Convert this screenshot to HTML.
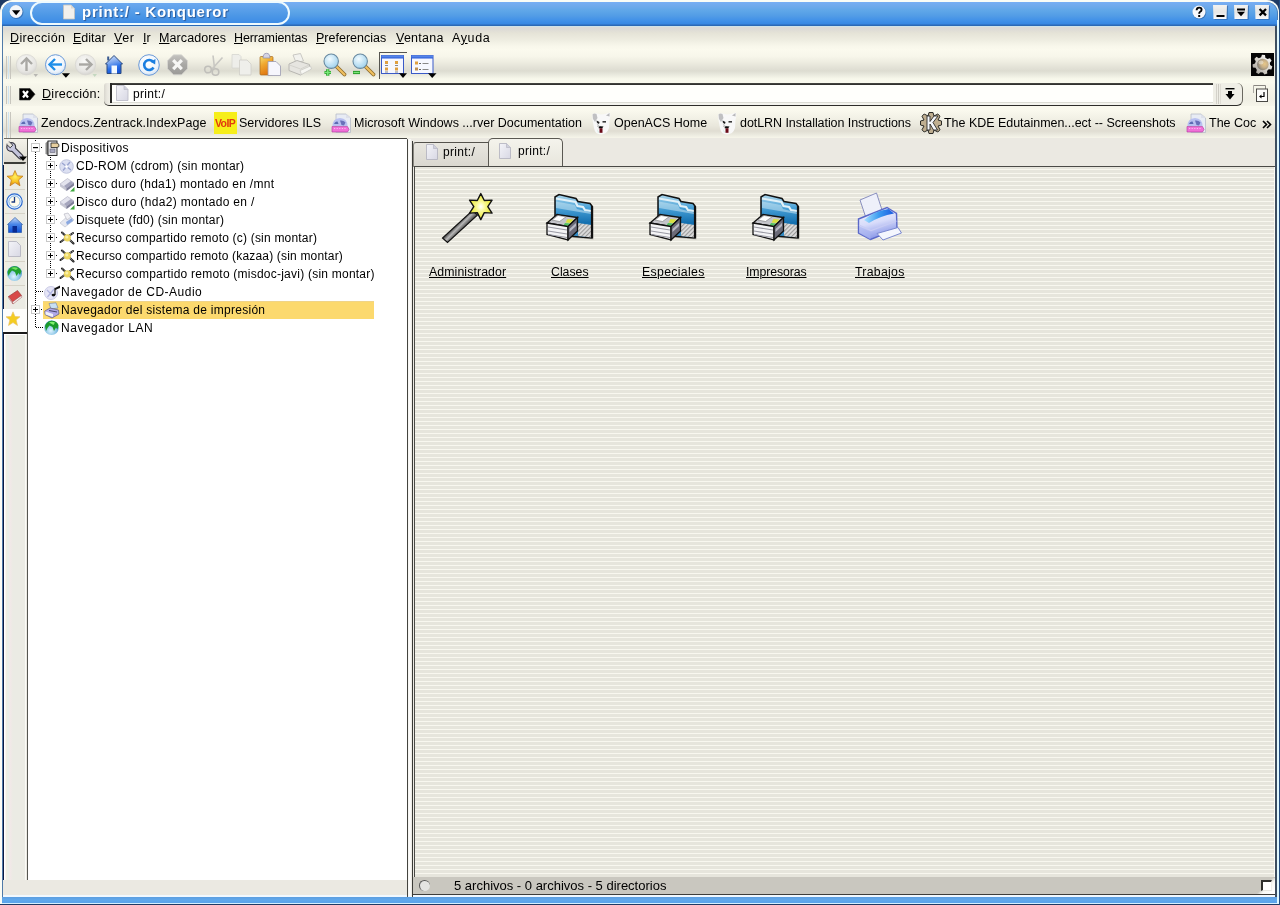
<!DOCTYPE html>
<html><head><meta charset="utf-8">
<style>
html,body{margin:0;padding:0}
body{width:1280px;height:905px;position:relative;overflow:hidden;background:#f6f8fa;font-family:"Liberation Sans",sans-serif;color:#000}
.a{position:absolute}
.t{will-change:transform;position:absolute;white-space:nowrap;line-height:14px;font-size:12.5px;height:14px}
.ul{text-decoration:underline;text-underline-offset:0.5px;text-decoration-thickness:1px}
svg{position:absolute;overflow:visible}
</style></head><body>
<!-- navy desktop corners -->
<div class="a" style="left:0;top:0;width:14px;height:14px;background:#1f3a64"></div>
<div class="a" style="left:1266px;top:0;width:14px;height:14px;background:#1f3a64"></div>
<div class="a" style="left:0;top:904px;width:1280px;height:1px;background:#1f3a64"></div>
<div class="a" style="left:1279px;top:0;width:1px;height:905px;background:#234c80"></div>
<!-- window light outline -->
<div class="a" style="left:0;top:0;width:1279px;height:904px;background:#fbfcf6;border-radius:12px 12px 0 0"></div>
<!-- frame blue -->
<div class="a" style="left:2px;top:2px;width:1276px;height:901px;background:#4a7fb8;border-radius:11px 11px 0 0"></div>
<!-- title bar -->
<div class="a" style="left:2px;top:2px;width:1275px;height:24px;border-radius:11px 11px 0 0;background:linear-gradient(#78aef4 0px,#70aaec 4px,#5ea6e8 9px,#529ce6 14px,#3f8fe8 19px,#3787e2 22px,#2b68b6 23px,#2b68b6 24px)"></div>
<!-- title capsule -->
<div class="a" style="left:30px;top:1px;width:256px;height:20px;border:2px solid #eefaff;border-radius:12px;background:linear-gradient(#6aa8ee,#4d98e6 60%,#3d8ce6)"></div>
<!-- bottom blue bar -->
<div class="a" style="left:2px;top:895px;width:1275px;height:2px;background:#f0f8ff"></div>
<div class="a" style="left:2px;top:897px;width:1275px;height:6px;background:linear-gradient(#5d9ee0,#5fa8ec 3px,#5aa2ea)"></div>
<div class="a" style="left:2px;top:903px;width:1277px;height:1px;background:#d6f0ff"></div>
<!-- right border -->
<div class="a" style="left:1275px;top:26px;width:2px;height:871px;background:#3e4e60"></div>
<div class="a" style="left:1277px;top:20px;width:2px;height:884px;background:#e0f8ff"></div>
<!-- left border -->
<div class="a" style="left:2px;top:26px;width:1px;height:871px;background:#4f7aa8"></div>

<!-- main window body -->
<div class="a" id="body" style="left:3px;top:26px;width:1272px;height:869px;background:#ebe9e2"></div>
<!-- menubar + toolbar gradient -->
<div class="a" style="left:3px;top:26px;width:1272px;height:57px;background:linear-gradient(#cfe2e8 0px,#cfe2e8 1px,#dddad8 1px,#dcdad6 3px,#e5e3d7 7px,#eeede1 14px,#f8f7eb 20px,#fbfaee 24px,#f8f7eb 30px,#eeede1 36px,#e2e1d6 42px,#dddcd1 45px,#eaeadf 49px,#f8f8ec 53px,#fafaee 57px)"></div>
<!-- address bar bg -->
<div class="a" style="left:3px;top:83px;width:1272px;height:23px;background:linear-gradient(#f8f8ec 0px,#f2f1e6 10px,#efeee3 16px,#f6f5ea 23px)"></div>
<!-- bookmark bar -->
<div class="a" style="left:3px;top:106px;width:1272px;height:32px;background:linear-gradient(#faf9ee 0px,#faf9ee 4px,#f2f1e6 12px,#e9e7dc 20px,#e0ddd2 25px,#ecebe0 29px,#f7f6ea 32px)"></div>


<!-- ============ MAIN AREA ============ -->
<!-- sidebar buttons column -->
<div class="a" style="left:3px;top:165px;width:1px;height:144px;background:#0a1a40"></div><div class="a" style="left:3px;top:334px;width:1px;height:546px;background:#0a1a40"></div>
<div class="a" style="left:4px;top:139px;width:23px;height:24px;background:linear-gradient(#f4f2ea,#dddbd2)"></div>
<div class="a" style="left:4px;top:162px;width:22px;height:2px;background:#3c3c38;border-radius:0 0 2px 0"></div><div class="a" style="left:4px;top:138px;width:23px;height:1px;background:#6e6c64"></div>
<div class="a" style="left:4px;top:165px;width:23px;height:144px;background:linear-gradient(90deg,#f6f0e4 0px,#f2ecdc 2px,#e6f0e6 4px,#f2e8e6 6px,#ebebe4 9px,#ebebe4 21px,#f6f6f0 22px,#f6f6f0 23px)"></div>
<div class="a" style="left:5px;top:189px;width:20px;height:1px;background:#d6d3c8"></div>
<div class="a" style="left:5px;top:213px;width:20px;height:1px;background:#d6d3c8"></div>
<div class="a" style="left:5px;top:237px;width:20px;height:1px;background:#d6d3c8"></div>
<div class="a" style="left:5px;top:261px;width:20px;height:1px;background:#d6d3c8"></div>
<div class="a" style="left:5px;top:285px;width:20px;height:1px;background:#d6d3c8"></div>
<div class="a" style="left:3px;top:309px;width:24px;height:23px;background:#fdfdfb"></div>
<div class="a" style="left:3px;top:332px;width:24px;height:2px;background:#1a1a1a"></div>
<div class="a" style="left:4px;top:334px;width:22px;height:546px;border-left:1px solid #ffffff;border-top:1px solid #ffffff;border-right:1px solid #fafaf6;box-sizing:border-box;background:linear-gradient(90deg,#ffffff 0px,#f4ede0 1px,#e6f0e8 3px,#f2e8e8 5px,#ebebe4 8px,#ebebe4 100%)"></div>
<!-- tree panel -->
<div class="a" style="left:27px;top:138px;width:380px;height:742px;background:#ffffff"></div>
<div class="a" style="left:27px;top:138px;width:1px;height:742px;background:#555550"></div>
<div class="a" style="left:27px;top:138px;width:380px;height:1px;background:#444440"></div>
<!-- splitter -->
<div class="a" style="left:407px;top:139px;width:1px;height:758px;background:#44443f;border-radius:1px"></div>
<div class="a" style="left:408px;top:139px;width:4px;height:757px;background:linear-gradient(90deg,#f4f3ee,#ffffff,#e6e4dc)"></div>
<div class="a" style="left:412px;top:141px;width:1px;height:756px;background:#3a3a36"></div>
<!-- tabs -->
<div class="a" style="left:413px;top:142px;width:75px;height:24px;border-top:1px solid #54524c;border-left:1px solid #8a8880;border-radius:3px 0 0 0;background:linear-gradient(#e8e6df,#d9d7cf)"></div>
<div class="a" style="left:488px;top:138px;width:73px;height:28px;border:1px solid #5a5852;border-bottom:none;border-radius:5px 5px 0 0;background:linear-gradient(#f4f3ec,#e7e5dc)"></div>
<!-- content area -->
<div class="a" style="left:414px;top:166px;width:861px;height:711px;background:repeating-linear-gradient(#f8f7ef 0px,#f8f7ef 1px,#e6e5dc 1px,#e6e5dc 4px);background-position:0 3px"></div>
<div class="a" style="left:414px;top:166px;width:861px;height:1px;background:#4a4a46"></div>
<div class="a" style="left:414px;top:166px;width:1px;height:711px;background:#4a4a46"></div>
<div class="a" style="left:1274px;top:167px;width:1px;height:710px;background:#fbfbf6"></div>
<!-- status bar -->
<div class="a" style="left:413px;top:877px;width:862px;height:17px;background:#c9c7bf"></div>
<div class="a" style="left:413px;top:894px;width:862px;height:1px;background:#3e3d3a"></div>
<div class="a" style="left:419px;top:880px;width:11px;height:11px;border-radius:50%;background:#e4e4e2;border-left:1px solid #555;border-top:1px solid #555;box-sizing:border-box"></div>
<div class="t" style="left:454px;top:879px;font-size:13px;">5 archivos - 0 archivos - 5 directorios</div>
<div class="a" style="left:1257px;top:878px;width:18px;height:16px;background:linear-gradient(135deg,#c9c7bf 0%,#c9c7bf 45%,#f8f8f4 60%,#ffffff 100%)"></div><div class="a" style="left:1261px;top:880px;width:11px;height:11px;background:#fff;border-top:2px solid #2e2e2c;border-left:2px solid #2e2e2c;border-right:1px solid #f0f0ea;border-bottom:1px solid #e8e8e2;box-sizing:border-box"></div>



<!-- ============ ADDRESS WIDGETS ============ -->
<div class="a" style="left:6px;top:86px;width:1px;height:18px;background:#c8c6be"></div>
<div class="a" style="left:8px;top:86px;width:1px;height:18px;background:#d0e4f0"></div>
<div class="a" style="left:10px;top:86px;width:1px;height:18px;background:#c8c6be"></div>
<svg style="left:19px;top:88px" width="17" height="13" viewBox="0 0 17 13">
 <path d="M0.5 0.5 L11 0.5 L16 6.2 L11 12 L0.5 12 Z" fill="#000" stroke="#333" stroke-width="0.6"/>
 <path d="M4 3 L9 9.5 M9 3 L4 9.5" stroke="#fff" stroke-width="2.2"/>
</svg>
<!-- combobox -->
<div class="a" style="left:104px;top:83px;width:1139px;height:23px;border-radius:3px 6px 6px 5px;background:linear-gradient(90deg,#d8d6ce,#e9e7df 3px,#efeee6 6px);border-bottom:1px solid #2e2d2a;border-right:1px solid #6a6860;box-sizing:border-box"></div>
<div class="a" style="left:110px;top:83px;width:1103px;height:2px;background:linear-gradient(#4a4a46,#2a2a28)"></div>
<div class="a" style="left:110px;top:83px;width:2px;height:20px;background:#2a2a28"></div>
<div class="a" style="left:112px;top:85px;width:1101px;height:17px;background:#fffffc"></div>
<div class="a" style="left:112px;top:102px;width:1101px;height:1px;background:#dcdcd4"></div><div class="a" style="left:112px;top:103px;width:1101px;height:2px;background:#f4f4ee"></div>
<div class="a" style="left:1216px;top:84px;width:1px;height:20px;background:#d4d2ca"></div>
<div class="a" style="left:1218px;top:84px;width:1px;height:20px;background:#cdcbc3"></div>
<div class="a" style="left:1220px;top:84px;width:1px;height:20px;background:#dedcd4"></div>
<svg style="left:1225px;top:88px" width="11" height="13" viewBox="0 0 11 13">
 <rect x="0.5" y="0" width="9" height="1.4" fill="#000"/>
 <rect x="3" y="3" width="4" height="3.5" fill="#000"/>
 <path d="M0.5 6 L9.5 6 L5 11.5 Z" fill="#000"/>
</svg>
<svg style="left:1253px;top:85px" width="17" height="18" viewBox="0 0 17 18">
 <path d="M0.5 0.5 L12.5 0.5 L12.5 5" fill="none" stroke="#888580" stroke-width="1"/>
 <path d="M0.5 0.5 L0.5 8" fill="none" stroke="#aaa8a2" stroke-width="1"/>
 <rect x="3.5" y="4" width="11" height="12.5" fill="#fcfcfa" stroke="#4a4945" stroke-width="1"/>
 <path d="M11 7 L11 11.5 L7 11.5" fill="none" stroke="#000" stroke-width="1.2"/>
 <path d="M6 11.5 L8.5 9.5 L8.5 13.5 Z" fill="#000"/>
</svg>
<svg style="left:116px;top:85px" width="13" height="16" viewBox="0 0 13 16">
 <path d="M0.5 0.5 L8 0.5 L12 4.5 L12 15.5 L0.5 15.5 Z" fill="url(#docg)" stroke="#b8b8c4" stroke-width="0.8"/>
 <path d="M8 0.5 L8 4.5 L12 4.5" fill="#cfd0dc" stroke="#b8b8c4" stroke-width="0.6"/>
 <defs><linearGradient id="docg" x1="0" y1="0" x2="1" y2="1"><stop offset="0" stop-color="#f4f4f8"/><stop offset="1" stop-color="#d8d8e4"/></linearGradient></defs>
</svg>


<!-- ============ BOOKMARK ICONS ============ -->
<div class="a" style="left:6px;top:112px;width:1px;height:26px;background:#c8c6be"></div>
<div class="a" style="left:8px;top:112px;width:1px;height:26px;background:#d0e4f0"></div>
<div class="a" style="left:10px;top:112px;width:1px;height:26px;background:#c8c6be"></div>
<svg style="left:0;top:0" width="1" height="1"><defs>
 <symbol id="webdoc" viewBox="0 0 21 20">
  <path d="M5 1 L15 1 L19.5 5 L19.5 19.5 L5 19.5 Z" fill="#e8ecf4" stroke="#b8bcc8" stroke-width="0.8"/>
  <path d="M15 1 L15 5 L19.5 5" fill="#dde0ea"/>
  <path d="M1.5 13 Q1.5 5.5 9 5 Q16.5 5.5 16.5 13 Z" fill="#b8c0f0"/>
  <path d="M3 11 Q4 8 6.5 8.5 L7.5 11 Z" fill="#4a5aa8" opacity="0.85"/>
  <path d="M9 7.5 Q12.5 7 14.5 9.5 L13 12.5 L10.5 12 Z" fill="#5a62b0" opacity="0.85"/>
  <path d="M1 13.5 L16.5 13.5 L18 16.5 L16.5 19 L1 19 Z" fill="#f070d8" stroke="#b0389a" stroke-width="0.6"/>
  <path d="M3 15.5 L15 15.5" stroke="#ffb8f0" stroke-width="1" stroke-dasharray="1.2 1.4"/>
 </symbol>
 <symbol id="dog" viewBox="0 0 22 23">
  <path d="M2 3 Q3 0.5 7 1.5 L11 2.5 L15 2 L20 0.5 Q21 4 19.5 8 L19 16 Q17 22.5 11 22.5 Q5 22.5 4 16 L2.5 8 Z" fill="#f8f8f8"/>
  <path d="M2.5 2.5 Q4 1 6.5 2 L7.5 6 L5 10 L3 7 Z" fill="#c0c0c2"/>
  <path d="M19.5 1 L16 3.5 L19.5 4.5 Z" fill="#b8b8ba"/>
  <path d="M6.5 8.5 L9.5 10 L9 12 L7 10.8 Z" fill="#1a1a1a"/>
  <rect x="12.5" y="9" width="3.5" height="1.6" fill="#3a3a3a"/>
  <path d="M7.5 14 L13.5 14.5 L12 16.5 L9 16.3 Z" fill="#0a0a0a"/>
  <rect x="9.5" y="16.3" width="3" height="4.5" fill="#6a0a18"/>
  <path d="M6.5 10 L8.5 17 L9.5 14 Z" fill="#c4c4c4"/>
  <path d="M7 17 L9 20 L8 21 Z" fill="#b8e8e0" opacity="0.6"/>
 </symbol>
</defs></svg>
<svg style="left:18px;top:113px" width="21" height="20"><use href="#webdoc"/></svg>
<div class="a" style="left:214px;top:112px;width:23px;height:22px;background:#f6ee1a"></div>
<div class="t" style="left:215px;top:117px;font-size:10.5px;font-weight:bold;color:#e23a10;letter-spacing:-0.6px;line-height:12px">VoIP</div>
<svg style="left:331px;top:113px" width="21" height="20"><use href="#webdoc"/></svg>
<svg style="left:590px;top:112px" width="22" height="23"><use href="#dog"/></svg>
<svg style="left:716px;top:112px" width="22" height="23"><use href="#dog"/></svg>
<svg style="left:920px;top:112px" width="22" height="22" viewBox="0 0 22 22">
 <g transform="translate(11,11)">
  <path d="M-2 -10.5 L2 -10.5 L3 -7 L6.8 -9 L9 -6.8 L7 -3 L10.5 -2 L10.5 2 L7 3 L9 6.8 L6.8 9 L3 7 L2 10.5 L-2 10.5 L-3 7 L-6.8 9 L-9 6.8 L-7 3 L-10.5 2 L-10.5 -2 L-7 -3 L-9 -6.8 L-6.8 -9 L-3 -7 Z" fill="#bfae90" stroke="#2a2a26" stroke-width="1"/>
 </g>
 <path d="M7 4 L10 4 L10 9.5 L14 4 L18 4 L13 10.5 L17.5 18 L13.5 18 L10 12 L10 18 L7 18 Z" fill="#f4f6fa" stroke="#2a2a2a" stroke-width="0.9"/>
</svg>
<svg style="left:1186px;top:113px" width="21" height="20"><use href="#webdoc"/></svg>
<svg style="left:1262px;top:120px" width="10" height="9" viewBox="0 0 10 9">
 <path d="M1 1 L4.5 4.5 L1 8 M5 1 L8.5 4.5 L5 8" fill="none" stroke="#000" stroke-width="1.6"/>
</svg>


<!-- highlight -->
<div class="a" style="left:43px;top:301px;width:331px;height:18px;background:#fcd96e;box-shadow:inset 0 1px 0 #f0d488"></div>
<!-- ============ SIDEBAR ICONS ============ -->
<svg style="left:6px;top:141px" width="22" height="21" viewBox="0 0 22 21">
 <path d="M5 6 L14.5 15.5" stroke="#3a3a44" stroke-width="6" stroke-linecap="round"/>
 <circle cx="5.2" cy="6" r="5" fill="#3a3a44"/>
 <path d="M5 6 L14.5 15.5" stroke="#c4c4dc" stroke-width="3.6" stroke-linecap="round"/>
 <circle cx="5.2" cy="6" r="3.8" fill="#c8c8e0"/>
 <path d="M0.5 3.2 L3.2 0.5 L6.8 4.2 L4.2 6.8 Z" fill="#e6e4dc"/>
 <path d="M3.2 0.5 L6.8 4.2 L4.2 6.8 L0.5 3.2" fill="none" stroke="#3a3a44" stroke-width="1"/>
 <path d="M13 15.5 L21 15.5 L17 20 Z" fill="#000"/>
</svg>
<svg style="left:0;top:0" width="1" height="1"><defs>
 <radialGradient id="starg" cx="0.5" cy="0.4" r="0.6"><stop offset="0" stop-color="#fff060"/><stop offset="0.6" stop-color="#f8c020"/><stop offset="1" stop-color="#d88010"/></radialGradient>
 <radialGradient id="globeg" cx="0.45" cy="0.7" r="0.7"><stop offset="0" stop-color="#e0f4ff"/><stop offset="0.5" stop-color="#90c8e8"/><stop offset="1" stop-color="#3a88c0"/></radialGradient>
</defs></svg>
<svg style="left:6px;top:170px" width="18" height="17" viewBox="0 0 18 17">
 <path d="M9 0.5 L11.3 5.8 L17 6.2 L12.6 9.9 L14 15.8 L9 12.6 L4 15.8 L5.4 9.9 L1 6.2 L6.7 5.8 Z" fill="url(#starg)" stroke="#c07818" stroke-width="0.7"/>
</svg>
<svg style="left:6px;top:193px" width="17" height="17" viewBox="0 0 17 17">
 <circle cx="8.5" cy="8.5" r="7.7" fill="#eef6ff" stroke="#2a6ad0" stroke-width="1.2"/>
 <circle cx="8.5" cy="8.5" r="5.6" fill="#fffbea" stroke="#5a9ae0" stroke-width="0.8"/>
 <path d="M8.5 4 L8.5 9 L5.5 9" fill="none" stroke="#1a3a80" stroke-width="1.3"/>
</svg>
<svg style="left:7px;top:217px" width="16" height="16" viewBox="0 0 16 16">
 <path d="M0.5 7.5 L8 0.5 L15.5 7.5 L14.5 7.5 L14.5 15.5 L1.5 15.5 L1.5 7.5 Z" fill="url(#house)" stroke="#2a5aa8" stroke-width="0.7"/>
 <rect x="5.5" y="9" width="4.5" height="6.5" fill="#0a2a90"/>
</svg>
<svg style="left:8px;top:241px" width="14" height="17" viewBox="0 0 14 17">
 <path d="M0.5 0.5 L8.5 0.5 L12.5 4.5 L12.5 15.5 L0.5 15.5 Z" fill="url(#docg)" stroke="#b0b0bc" stroke-width="0.8"/>
</svg>
<svg style="left:6px;top:265px" width="17" height="17" viewBox="0 0 17 17">
 <circle cx="8.5" cy="8.5" r="7.5" fill="url(#globeg)"/>
 <path d="M1.5 7 Q3 2 8 1.2 Q13 1.2 15.5 6 L14 10 L12.5 8 L10.5 11 L9 7 L6 5.5 L4 8 L2.5 11 Z" fill="#20a030"/>
 <path d="M5 3 Q8 1.5 12 3 L10 5 Z" fill="#70e060"/>
</svg>
<svg style="left:7px;top:289px" width="16" height="16" viewBox="0 0 16 16">
 <path d="M1.5 7.5 L10.5 1.5 L14.5 6.5 L5.5 13 Z" fill="#d84848" stroke="#903030" stroke-width="0.6"/>
 <path d="M1.5 7.5 L5.5 13 L6 15 L2 9.5 Z" fill="#f8e0e0" stroke="#a05050" stroke-width="0.5"/>
 <path d="M5.5 13 L14.5 6.5 L14.8 8.2 L6 15 Z" fill="#f8f0f0" stroke="#a05050" stroke-width="0.5"/>
</svg>
<svg style="left:5px;top:311px" width="16" height="16" viewBox="0 0 16 16">
 <path d="M8 0.8 L10 5.5 L15 5.8 L11.2 9 L12.5 14.5 L8 11.6 L3.5 14.5 L4.8 9 L1 5.8 L6 5.5 Z" fill="#f4cc20" stroke="#e8c068" stroke-width="0.6"/>
</svg>

<!-- ============ TREE LINES / ICONS ============ -->
<svg style="left:28px;top:139px" width="60" height="200" viewBox="0 0 60 200">
 <g fill="#000">
  <rect x="7" y="1" width="1" height="1"/>
  <rect x="13" y="8" width="1" height="1"/>
 </g>
 <g fill="none" stroke="#000" stroke-width="1" stroke-dasharray="1 1">
  <path d="M7.5 13 L7.5 188"/>
  <path d="M8 152.5 L15 152.5"/>
  <path d="M8 188.5 L15 188.5"/>
  <path d="M22.5 18 L22.5 135"/>
 </g>
 <g>
  <rect x="3.5" y="4.5" width="8" height="8" fill="#fff" stroke="#c8c8c8"/>
  <rect x="5" y="8" width="5" height="1.2" fill="#000"/>
 </g>
</svg>
<div class="a" style="left:46px;top:161px;width:7px;height:7px;border:1px solid #c8c8c8;background:#fff"></div><div class="a" style="left:48px;top:165px;width:5px;height:1px;background:#000"></div><div class="a" style="left:50px;top:163px;width:1px;height:5px;background:#000"></div><div class="a" style="left:56px;top:165px;width:1px;height:1px;background:#000"></div><div class="a" style="left:46px;top:179px;width:7px;height:7px;border:1px solid #c8c8c8;background:#fff"></div><div class="a" style="left:48px;top:183px;width:5px;height:1px;background:#000"></div><div class="a" style="left:50px;top:181px;width:1px;height:5px;background:#000"></div><div class="a" style="left:56px;top:183px;width:1px;height:1px;background:#000"></div><div class="a" style="left:46px;top:197px;width:7px;height:7px;border:1px solid #c8c8c8;background:#fff"></div><div class="a" style="left:48px;top:201px;width:5px;height:1px;background:#000"></div><div class="a" style="left:50px;top:199px;width:1px;height:5px;background:#000"></div><div class="a" style="left:56px;top:201px;width:1px;height:1px;background:#000"></div><div class="a" style="left:46px;top:215px;width:7px;height:7px;border:1px solid #c8c8c8;background:#fff"></div><div class="a" style="left:48px;top:219px;width:5px;height:1px;background:#000"></div><div class="a" style="left:50px;top:217px;width:1px;height:5px;background:#000"></div><div class="a" style="left:56px;top:219px;width:1px;height:1px;background:#000"></div><div class="a" style="left:46px;top:233px;width:7px;height:7px;border:1px solid #c8c8c8;background:#fff"></div><div class="a" style="left:48px;top:237px;width:5px;height:1px;background:#000"></div><div class="a" style="left:50px;top:235px;width:1px;height:5px;background:#000"></div><div class="a" style="left:56px;top:237px;width:1px;height:1px;background:#000"></div><div class="a" style="left:46px;top:251px;width:7px;height:7px;border:1px solid #c8c8c8;background:#fff"></div><div class="a" style="left:48px;top:255px;width:5px;height:1px;background:#000"></div><div class="a" style="left:50px;top:253px;width:1px;height:5px;background:#000"></div><div class="a" style="left:56px;top:255px;width:1px;height:1px;background:#000"></div><div class="a" style="left:46px;top:269px;width:7px;height:7px;border:1px solid #c8c8c8;background:#fff"></div><div class="a" style="left:48px;top:273px;width:5px;height:1px;background:#000"></div><div class="a" style="left:50px;top:271px;width:1px;height:5px;background:#000"></div><div class="a" style="left:56px;top:273px;width:1px;height:1px;background:#000"></div><div class="a" style="left:31px;top:305px;width:7px;height:7px;border:1px solid #c8c8c8;background:#fff"></div><div class="a" style="left:33px;top:309px;width:5px;height:1px;background:#000"></div><div class="a" style="left:35px;top:307px;width:1px;height:5px;background:#000"></div><div class="a" style="left:41px;top:309px;width:1px;height:1px;background:#000"></div>

<!-- tree icons -->
<svg style="left:0;top:0" width="1" height="1"><defs>
 <symbol id="hdd" viewBox="0 0 16 16">
  <path d="M1 8 L8.5 2.5 L15 7 L15 9.5 L7.5 15 L1 10.5 Z" fill="#b4b4c4" opacity="0.75"/>
  <path d="M1 8 L8.5 2.5 L15 7 L7.5 12.5 Z" fill="#e4e4ee" stroke="#b8b8c8" stroke-width="0.6"/>
  <path d="M5 10 L12 5 L14.5 7.2 L7.5 12.3 Z" fill="#8a8aa8" opacity="0.7"/>
  <path d="M7.5 12.5 L15 7 L15 9.5 L7.5 15 Z" fill="#6a6a88" opacity="0.8"/>
  <path d="M11 15.5 L15.5 11 L15.5 15.5 Z" fill="#40a840"/>
 </symbol>
 <symbol id="share" viewBox="0 0 16 16">
  <path d="M3 2.5 L14.5 13.5" stroke="#1e1e1e" stroke-width="2.1" stroke-linecap="round"/>
  <path d="M14 3 L1.5 12" stroke="#1e1e1e" stroke-width="2.1" stroke-linecap="round"/>
  <path d="M3.3 2.8 L14.2 13.2 M13.7 3.3 L1.8 11.7" stroke="#f4f4f4" stroke-width="0.7" stroke-dasharray="1.2 0.9"/>
  <circle cx="8.4" cy="7.8" r="3.6" fill="#ecd660"/>
  <circle cx="7.8" cy="7" r="1.6" fill="#f8f0a8"/>
 </symbol>
</defs></svg>
<svg style="left:44px;top:140px" width="16" height="16" viewBox="0 0 16 16">
 <path d="M1.5 3 L4 1 L4 15 L1.5 14 Z" fill="#8a8a8a"/>
 <rect x="4" y="1" width="9" height="14.5" fill="#e4e4e8" stroke="#1a1a1a" stroke-width="0.9"/>
 <rect x="6" y="9" width="5" height="3.5" fill="#a8a8c0" stroke="#505060" stroke-width="0.5"/>
 <path d="M7 3 L13 3 Q15.5 3.5 15 6.5 L13 7.5 L7 7.5 Z" fill="#e8d0a0" stroke="#222" stroke-width="0.8"/>
</svg>
<svg style="left:59px;top:158px" width="16" height="16" viewBox="0 0 16 16">
 <circle cx="7.5" cy="8.5" r="6.8" fill="#dce0f2" stroke="#b8bcd8" stroke-width="0.8"/>
 <path d="M3 5 L12 12 M4 12.5 L11 4" stroke="#9aa4d0" stroke-width="1.4"/>
 <circle cx="7.5" cy="8.5" r="1.5" fill="#fff"/>
</svg>
<svg style="left:59px;top:176px" width="16" height="16"><use href="#hdd"/></svg>
<svg style="left:59px;top:194px" width="16" height="16"><use href="#hdd"/></svg>
<svg style="left:59px;top:212px" width="16" height="16" viewBox="0 0 16 16">
 <path d="M1 11 L6 15 L15 8 L10 3 Z" fill="#e6e8f0" stroke="#b8bcc8" stroke-width="0.6"/>
 <path d="M5 2 L9 1 L12 5 L8 8 Z" fill="#f0f0f4" stroke="#b0b0bc" stroke-width="0.6"/>
 <path d="M7 10 L13 6 L14 9 L8 13 Z" fill="#8aa8e0"/>
</svg>
<svg style="left:59px;top:230px" width="16" height="16"><use href="#share"/></svg>
<svg style="left:59px;top:248px" width="16" height="16"><use href="#share"/></svg>
<svg style="left:59px;top:266px" width="16" height="16"><use href="#share"/></svg>
<svg style="left:44px;top:284px" width="17" height="16" viewBox="0 0 17 16">
 <circle cx="7" cy="9" r="6.5" fill="#e6e6f6" stroke="#c0c0e0" stroke-width="0.8"/>
 <path d="M3 6 L10 13 M3.5 13 L10 5" stroke="#b0b4e0" stroke-width="1.2"/>
 <path d="M11 4 L11 11" stroke="#111" stroke-width="1.2"/>
 <path d="M11 4 L16 1.5 L16 4 L11 6" fill="#111"/>
 <ellipse cx="9.5" cy="11" rx="1.8" ry="1.3" fill="#111"/>
</svg>
<svg style="left:44px;top:302px" width="16" height="16" viewBox="0 0 16 16">
 <path d="M5 1.5 L12 0.8 L14 6 L7 7 Z" fill="#c8e0f4" stroke="#6a7a9a" stroke-width="0.6"/>
 <path d="M0.8 9 L6 6 L14.5 8 L15 12 L8 16 L1 12.5 Z" fill="#b0a8e8" stroke="#5a5a7a" stroke-width="0.7"/>
 <path d="M1.5 9.5 L9 12 L9 15 L1.5 12.5 Z" fill="#f0f0f8"/>
 <path d="M5 8.5 L13 10" stroke="#2a2a4a" stroke-width="0.8"/>
</svg>
<svg style="left:44px;top:320px" width="16" height="16" viewBox="0 0 16 16">
 <circle cx="7.5" cy="7.8" r="7.2" fill="url(#globeg)"/>
 <path d="M1 6 Q2.5 1.5 7.5 0.8 Q12.5 0.8 14.5 5 L13.5 9.5 L12 7.5 L10 11 L8.5 7 L5.5 5.5 L3.5 8 L2 11 Z" fill="#1a9a2a"/>
 <path d="M5 2.5 Q8 1 11 2.5 L9.5 5 Z" fill="#80f070"/>
</svg>


<!-- ============ CONTENT ICONS ============ -->
<svg style="left:0;top:0" width="1" height="1"><defs>
 <linearGradient id="stick" x1="0" y1="0" x2="1" y2="1"><stop offset="0" stop-color="#3a3a3a"/><stop offset="0.5" stop-color="#9a9a9a"/><stop offset="1" stop-color="#2a2a2a"/></linearGradient>
 <radialGradient id="starw" cx="0.5" cy="0.5" r="0.5"><stop offset="0" stop-color="#ffffff"/><stop offset="0.4" stop-color="#f8f890"/><stop offset="1" stop-color="#e8e830"/></radialGradient>
 <linearGradient id="fold" x1="0" y1="0" x2="0" y2="1"><stop offset="0" stop-color="#b0d8ec"/><stop offset="0.3" stop-color="#4aa2d8"/><stop offset="0.65" stop-color="#1470b0"/><stop offset="1" stop-color="#3a90c8"/></linearGradient>
 <linearGradient id="prnbody" x1="0" y1="0" x2="0" y2="1"><stop offset="0" stop-color="#f4f4fc"/><stop offset="1" stop-color="#c8c8f0"/></linearGradient>
 <pattern id="hatch" width="3" height="3" patternUnits="userSpaceOnUse" patternTransform="rotate(45)"><rect width="3" height="3" fill="#e0e0e0"/><rect width="1.2" height="3" fill="#9a9a9a"/></pattern>
 <symbol id="prclass" viewBox="0 0 60 60">
  <path d="M16.5 10.5 L20.5 8 L37.5 12 L39.5 15 L51.5 17 L53.5 19.5 L53.5 51.5 L16.5 48.5 Z" fill="#000" opacity="0.18"/>
  <path d="M15 9 L19 6.5 L36 10.5 L38 13.5 L50 15.5 L52 18 L52 50 L15 47 Z" fill="url(#fold)" stroke="#111" stroke-width="1.5"/>
  <path d="M16 10.5 L35.5 14 L37.5 18 L43 19 L45 22 L51 23" fill="none" stroke="#e0f0f8" stroke-width="2.2"/>
  <path d="M16 13.5 L35 17 L37 21 L51 24.5 L51 26 L16 20 Z" fill="#c8e4f0" opacity="0.55"/>
  <path d="M38 35 L51.5 37 L51.5 49.5 L38 48 Z" fill="url(#hatch)"/>
  <path d="M52 18 L52 50" stroke="#111" stroke-width="2.2"/>
  <path d="M7 35 L17 26.5 L37.5 29.5 L28 38.5 Z" fill="#c4c4ca" stroke="#111" stroke-width="1.3"/>
  <path d="M12 32 L18 27.5 L26 28.8 L19.5 33.5 Z" fill="#ffffff" stroke="#666" stroke-width="0.5"/>
  <path d="M27.5 31 L33.5 31.5 L30.5 35 L25.5 34.5 Z" fill="#d8e040"/>
  <path d="M25 35 L30 35.5 L28 37.8 L23.5 37.3 Z" fill="#50c060"/>
  <path d="M7 35 L28 38.5 L28 52 L7 46.5 Z" fill="#f4f4f6" stroke="#111" stroke-width="1.3"/>
  <path d="M8 39 L27 42 M8 43 L27 46 M8 46.5 L27 49.5" stroke="#9a9aa4" stroke-width="1.1"/>
  <path d="M28 38.5 L37.5 29.5 L37.5 43 L28 52 Z" fill="#6a6a78" stroke="#111" stroke-width="1.3"/>
  <path d="M29.5 41 L36 35 L36 38 L29.5 44 Z" fill="#b8b8c4"/>
 </symbol>
</defs></svg>
<svg style="left:440px;top:188px" width="56" height="56" viewBox="0 0 56 56">
 <defs><linearGradient id="stick2" gradientUnits="userSpaceOnUse" x1="16.5" y1="35" x2="23.5" y2="42"><stop offset="0" stop-color="#202020"/><stop offset="0.45" stop-color="#b8b8b8"/><stop offset="1" stop-color="#303030"/></linearGradient></defs>
 <path d="M2.5 50 L7.5 54.5 L37.5 27 L32.5 22.5 Z" fill="url(#stick2)" stroke="#111" stroke-width="1.1"/>
 <path d="M40.80 5.60 L44.30 12.54 L52.06 12.10 L47.80 18.60 L52.06 25.10 L44.30 24.66 L40.80 31.60 L37.30 24.66 L29.54 25.10 L33.80 18.60 L29.54 12.10 L37.30 12.54 Z" fill="url(#starw)" stroke="#111" stroke-width="1.4" stroke-linejoin="round"/>
</svg>
<svg style="left:540px;top:188px" width="60" height="60"><use href="#prclass"/></svg>
<svg style="left:643px;top:188px" width="60" height="60"><use href="#prclass"/></svg>
<svg style="left:746px;top:188px" width="60" height="60"><use href="#prclass"/></svg>
<svg style="left:850px;top:188px" width="60" height="60" viewBox="0 0 60 60">
 <defs>
  <linearGradient id="prb2" x1="0" y1="0" x2="0.3" y2="1"><stop offset="0" stop-color="#f4f6ff"/><stop offset="0.55" stop-color="#d8dcfa"/><stop offset="1" stop-color="#8a98e8"/></linearGradient>
  <linearGradient id="slot2" x1="0" y1="0" x2="1" y2="0"><stop offset="0" stop-color="#a8e0ff"/><stop offset="0.5" stop-color="#3a9af0"/><stop offset="1" stop-color="#1a5ae0"/></linearGradient>
 </defs>
 <path d="M10 12 L26.5 5 L32 22 L15.5 28.5 Z" fill="#eef0fa" stroke="#8a90c0" stroke-width="1"/>
 <path d="M8.5 31 L37 19.5 L46.5 25.5 L47 41 L20.5 51.5 L8.5 45 Z" fill="url(#prb2)" stroke="#5a68c8" stroke-width="1.4"/>
 <path d="M14 32 Q24 23 38.5 21 L44 25.5 Q30 28 19 35 Z" fill="url(#slot2)"/>
 <path d="M9 37 L21 42.5 L46.5 33" fill="none" stroke="#c8ccf4" stroke-width="1.2"/>
 <path d="M9 45 L20.5 51.5 L20.5 44 L9 38 Z" fill="#a8b4f0" opacity="0.6"/>
 <path d="M27 45.5 L48 39.5 L51.5 45 L33 52 Z" fill="#f4f6fe" stroke="#7a88d0" stroke-width="1"/>
</svg>


<svg style="left:426px;top:144px" width="12" height="16" viewBox="0 0 12 16">
 <path d="M0.5 0.5 L7.5 0.5 L11.5 4.5 L11.5 15.5 L0.5 15.5 Z" fill="url(#docg)" stroke="#b0b0bc" stroke-width="0.8"/>
 <path d="M7.5 0.5 L7.5 4.5 L11.5 4.5" fill="#cfd0dc" stroke="#b0b0bc" stroke-width="0.6"/>
</svg>
<svg style="left:499px;top:143px" width="13" height="16" viewBox="0 0 13 16">
 <path d="M0.5 0.5 L7.5 0.5 L11.5 4.5 L11.5 15.5 L0.5 15.5 Z" fill="url(#docg)" stroke="#b0b0bc" stroke-width="0.8"/>
 <path d="M7.5 0.5 L7.5 4.5 L11.5 4.5" fill="#cfd0dc" stroke="#b0b0bc" stroke-width="0.6"/>
</svg>

<!-- ============ TEXT ============ -->
<div class="t" style="left:82px;top:3px;font-size:15px;font-weight:bold;color:#fff;letter-spacing:0.75px;line-height:17px;height:17px;text-shadow:1px 1px 1px #2a5a9a">print:/ - Konqueror</div>
<!-- menu -->
<div class="t" style="left:10px;top:31px;letter-spacing:0.35px"><span class="ul">D</span>irección</div>
<div class="t" style="left:73px;top:31px"><span class="ul">E</span>ditar</div>
<div class="t" style="left:114px;top:31px;letter-spacing:0.6px"><span class="ul">V</span>er</div>
<div class="t" style="left:143px;top:31px"><span class="ul">I</span>r</div>
<div class="t" style="left:159px;top:31px;letter-spacing:0.1px"><span class="ul">M</span>arcadores</div>
<div class="t" style="left:234px;top:31px;letter-spacing:-0.13px"><span class="ul">H</span>erramientas</div>
<div class="t" style="left:316px;top:31px"><span class="ul">P</span>referencias</div>
<div class="t" style="left:396px;top:31px;letter-spacing:0.25px"><span class="ul">V</span>entana</div>
<div class="t" style="left:452px;top:31px;letter-spacing:0.6px">A<span class="ul">y</span>uda</div>
<!-- address -->
<div class="t" style="left:42px;top:87px;font-size:12.6px;letter-spacing:0.25px"><span class="ul">D</span>irección:</div>
<div class="t" style="left:133px;top:87px;font-size:12px;letter-spacing:0.3px">print:/</div>
<!-- bookmarks -->
<div class="t" style="left:41px;top:116px;letter-spacing:0.09px">Zendocs.Zentrack.IndexPage</div>
<div class="t" style="left:239px;top:116px">Servidores ILS</div>
<div class="t" style="left:354px;top:116px">Microsoft Windows ...rver Documentation</div>
<div class="t" style="left:614px;top:116px">OpenACS Home</div>
<div class="t" style="left:740px;top:116px;letter-spacing:-0.065px">dotLRN Installation Instructions</div>
<div class="t" style="left:944px;top:116px;letter-spacing:-0.03px">The KDE Edutainmen...ect -- Screenshots</div>
<div class="t" style="left:1209px;top:116px">The Coc</div>
<!-- tabs -->
<div class="t" style="left:443px;top:145px;font-size:12px;letter-spacing:0.3px">print:/</div>
<div class="t" style="left:518px;top:144px;font-size:12px;letter-spacing:0.3px">print:/</div>
<!-- icon labels -->
<div class="t ul" style="left:429px;top:265px;font-size:12.3px;letter-spacing:0.1px">Administrador</div>
<div class="t ul" style="left:551px;top:265px;font-size:12.3px">Clases</div>
<div class="t ul" style="left:642px;top:265px;font-size:12.3px;letter-spacing:0.32px">Especiales</div>
<div class="t ul" style="left:746px;top:265px;font-size:12.3px;letter-spacing:-0.1px">Impresoras</div>
<div class="t ul" style="left:855px;top:265px;font-size:12.3px;letter-spacing:0.28px">Trabajos</div>
<!-- tree -->
<div class="t" style="left:61px;top:141px;font-size:12px;letter-spacing:0.31px">Dispositivos</div>
<div class="t" style="left:76px;top:159px;font-size:12px;letter-spacing:0.26px">CD-ROM (cdrom) (sin montar)</div>
<div class="t" style="left:76px;top:177px;font-size:12px;letter-spacing:0.29px">Disco duro (hda1) montado en /mnt</div>
<div class="t" style="left:76px;top:195px;font-size:12px;letter-spacing:0.33px">Disco duro (hda2) montado en /</div>
<div class="t" style="left:76px;top:213px;font-size:12px;letter-spacing:0.2px">Disquete (fd0) (sin montar)</div>
<div class="t" style="left:76px;top:231px;font-size:12px;letter-spacing:0.2px">Recurso compartido remoto (c) (sin montar)</div>
<div class="t" style="left:76px;top:249px;font-size:12px;letter-spacing:0.18px">Recurso compartido remoto (kazaa) (sin montar)</div>
<div class="t" style="left:76px;top:267px;font-size:12px;letter-spacing:0.23px">Recurso compartido remoto (misdoc-javi) (sin montar)</div>
<div class="t" style="left:61px;top:285px;font-size:12px;letter-spacing:0.5px">Navegador de CD-Audio</div>
<div class="t" style="left:61px;top:303px;font-size:12px;letter-spacing:0.28px">Navegador del sistema de impresión</div>
<div class="t" style="left:61px;top:321px;font-size:12px;letter-spacing:0.52px">Navegador LAN</div>


<!-- ============ TITLE ICONS ============ -->
<svg style="left:9px;top:4px" width="16" height="16" viewBox="0 0 16 16">
 <circle cx="7.5" cy="8" r="7" fill="#1f4f90" opacity="0.5"/>
 <circle cx="7" cy="7.5" r="6.5" fill="#f4f6fa"/>
 <path d="M3 6.2 L11.3 6.2 L7.15 11.2 Z" fill="#000"/>
</svg>
<svg style="left:62px;top:4px" width="14" height="16" viewBox="0 0 14 16">
 <path d="M1.5 1 L9 1 L12.5 4.5 L12.5 15 L1.5 15 Z" fill="#f2f0ec" stroke="#c8c4bc" stroke-width="0.8"/>
 <path d="M9 1 L9 4.5 L12.5 4.5" fill="#dcd8d0"/>
</svg>
<svg style="left:1192px;top:5px" width="16" height="16" viewBox="0 0 16 16">
 <circle cx="7.5" cy="7.5" r="6.8" fill="#1f4f90" opacity="0.5"/>
 <circle cx="7" cy="7" r="6.5" fill="#f6f8fb"/>
 <path d="M4.6 5.2 Q4.8 2.6 7.2 2.6 Q9.6 2.6 9.6 4.8 Q9.6 6.2 7.9 7 Q7.2 7.4 7.2 8.8" fill="none" stroke="#000" stroke-width="1.9"/>
 <rect x="6.2" y="10" width="2" height="2" fill="#000"/>
</svg>
<svg style="left:1213px;top:5px" width="16" height="16" viewBox="0 0 16 16">
 <path d="M0.5 0 L14.5 0 L14 14 L1 14 Z" fill="#1f4f90" opacity="0.55" transform="translate(0.6,0.8)"/>
 <path d="M0 0 L14 0 L13.5 14 L0.5 14 Z" fill="url(#tbg)"/>
 <rect x="3.5" y="10" width="8" height="2" fill="#000"/>
</svg>
<svg style="left:1234px;top:5px" width="16" height="16" viewBox="0 0 16 16">
 <path d="M0.5 0 L14.5 0 L14 14 L1 14 Z" fill="#1f4f90" opacity="0.55" transform="translate(0.6,0.8)"/>
 <path d="M0 0 L14 0 L13.5 14 L0.5 14 Z" fill="url(#tbg)"/>
 <rect x="3" y="3.5" width="8" height="2" fill="#000"/>
 <path d="M3 6.8 L11 6.8 L7 11.2 Z" fill="#000"/>
</svg>
<svg style="left:1255px;top:5px" width="16" height="16" viewBox="0 0 16 16">
 <defs><linearGradient id="tbg" x1="0" y1="0" x2="0" y2="1"><stop offset="0" stop-color="#f2f2f0"/><stop offset="0.5" stop-color="#e6e6e4"/><stop offset="1" stop-color="#fafafa"/></linearGradient></defs>
 <path d="M0.5 0 L14.5 0 L14 14 L1 14 Z" fill="#1f4f90" opacity="0.55" transform="translate(0.6,0.8)"/>
 <path d="M0 0 L14 0 L13.5 14 L0.5 14 Z" fill="url(#tbg)"/>
 <path d="M4.6 4 L11 10.4 M11 4 L4.6 10.4" stroke="#000" stroke-width="2.2"/>
</svg>


<!-- ============ TOOLBAR ICONS ============ -->
<svg style="left:0;top:0" width="1" height="1"><defs>
 <radialGradient id="gball" cx="0.45" cy="0.35" r="0.7"><stop offset="0" stop-color="#fafaf8"/><stop offset="0.7" stop-color="#e6e5e2"/><stop offset="1" stop-color="#d0cfcb"/></radialGradient>
 <radialGradient id="bball" cx="0.45" cy="0.35" r="0.7"><stop offset="0" stop-color="#ffffff"/><stop offset="0.7" stop-color="#eef4fb"/><stop offset="1" stop-color="#c8daf0"/></radialGradient>
 <linearGradient id="house" x1="0" y1="0" x2="0" y2="1"><stop offset="0" stop-color="#c8daf8"/><stop offset="0.45" stop-color="#4a86e8"/><stop offset="1" stop-color="#0e50d8"/></linearGradient>
 <radialGradient id="lens" cx="0.4" cy="0.35" r="0.7"><stop offset="0" stop-color="#f2fbff"/><stop offset="1" stop-color="#9cd0ec"/></radialGradient>
 <linearGradient id="winhead" x1="0" y1="0" x2="0" y2="1"><stop offset="0" stop-color="#6a9af0"/><stop offset="1" stop-color="#2a5ad8"/></linearGradient>
</defs></svg>
<!-- handle -->
<div class="a" style="left:6px;top:56px;width:1px;height:23px;background:#c8c6be"></div>
<div class="a" style="left:8px;top:56px;width:1px;height:23px;background:#d0e4f0"></div>
<div class="a" style="left:10px;top:56px;width:1px;height:23px;background:#c8c6be"></div>
<!-- up -->
<svg style="left:16px;top:54px" width="24" height="24" viewBox="0 0 24 24">
 <circle cx="10.5" cy="10.7" r="10.2" fill="url(#gball)" stroke="#d8d7d2" stroke-width="0.8"/>
 <path d="M10.5 4.5 L10.5 17" stroke="#a9a8a4" stroke-width="2.4"/>
 <path d="M5 10 L10.5 4.5 L16 10" fill="none" stroke="#a9a8a4" stroke-width="2.4"/>
 <path d="M17.5 20 L22 20 L19.7 23 Z" fill="#b8b7b2"/>
</svg>
<!-- back -->
<svg style="left:45px;top:54px" width="26" height="24" viewBox="0 0 26 24">
 <circle cx="10.5" cy="10.7" r="10" fill="url(#bball)" stroke="#6b9ad8" stroke-width="1"/>
 <path d="M4.5 10.5 L17 10.5" stroke="#1e8ee8" stroke-width="2.4"/>
 <path d="M10 5 L4.5 10.5 L10 16" fill="none" stroke="#1e8ee8" stroke-width="2.4"/>
 <path d="M16.8 19.3 L25 19.3 L20.9 23.8 Z" fill="#000"/>
</svg>
<!-- forward -->
<svg style="left:75px;top:54px" width="24" height="24" viewBox="0 0 24 24">
 <circle cx="10.5" cy="10.7" r="10.2" fill="url(#gball)" stroke="#d8d7d2" stroke-width="0.8"/>
 <path d="M4 10.5 L16.5 10.5" stroke="#a9a8a4" stroke-width="2.4"/>
 <path d="M11 5 L16.5 10.5 L11 16" fill="none" stroke="#a9a8a4" stroke-width="2.4"/>
 <path d="M17.5 20 L22 20 L19.7 23 Z" fill="#c4d8c0"/>
</svg>
<!-- home -->
<svg style="left:104px;top:54px" width="21" height="21" viewBox="0 0 21 21">
 <defs><linearGradient id="house2" x1="0" y1="0" x2="0.3" y2="1"><stop offset="0" stop-color="#dce8fa"/><stop offset="0.4" stop-color="#8ab0f0"/><stop offset="0.75" stop-color="#2a70e8"/><stop offset="1" stop-color="#1a58d8"/></linearGradient></defs>
 <path d="M1.5 10 L10 1.5 L18.5 10 L17 10 L17 19.5 L3 19.5 L3 10 Z" fill="url(#house2)" stroke="#2a4a80" stroke-width="1"/>
 <rect x="3.2" y="2.5" width="2" height="4" fill="#3a5a90"/>
 <rect x="7.5" y="11.5" width="5.5" height="8" fill="#f4faff"/>
</svg>
<!-- reload -->
<svg style="left:138px;top:54px" width="23" height="23" viewBox="0 0 23 23">
 <circle cx="11" cy="11" r="10.3" fill="url(#bball)" stroke="#6b9ad8" stroke-width="1"/>
 <path d="M15.2 8 A5 5 0 1 0 15.5 13.5" fill="none" stroke="#1a7ee0" stroke-width="2.6"/>
 <path d="M12.5 7.8 L17.5 5 L17.2 10.5 Z" fill="#1a7ee0"/>
</svg>
<!-- stop -->
<svg style="left:167px;top:54px" width="22" height="22" viewBox="0 0 22 22">
 <defs><linearGradient id="stopg" x1="0" y1="0" x2="0" y2="1"><stop offset="0" stop-color="#c4c3c0"/><stop offset="0.5" stop-color="#a8a7a4"/><stop offset="1" stop-color="#9c9b98"/></linearGradient></defs>
 <path d="M6.5 0.8 L14.5 0.8 L20.5 6.8 L20.5 14.8 L14.5 20.8 L6.5 20.8 L0.5 14.8 L0.5 6.8 Z" fill="url(#stopg)" stroke="#d8d7d2" stroke-width="0.8"/>
 <path d="M6.2 6.2 L14.8 15.2 M14.8 6.2 L6.2 15.2" stroke="#f6f6f4" stroke-width="3.2"/>
</svg>
<!-- cut -->
<svg style="left:203px;top:54px" width="22" height="22" viewBox="0 0 22 22">
 <path d="M10 1.5 L11.5 14 M19.5 3.5 L9 15" stroke="#c8c7c2" stroke-width="1.6"/>
 <circle cx="5" cy="15.5" r="3.3" fill="none" stroke="#c0bfba" stroke-width="1.6"/>
 <circle cx="12.5" cy="18" r="3.3" fill="none" stroke="#c0bfba" stroke-width="1.6"/>
</svg>
<!-- copy -->
<svg style="left:231px;top:54px" width="22" height="22" viewBox="0 0 22 22">
 <path d="M1 0.5 L8 0.5 L10 2.5 L10 14 L1 14 Z" fill="#eeeeea" stroke="#d6d5d0" stroke-width="0.8"/>
 <path d="M8.5 6 L16 6 L20 10 L20 21 L8.5 21 Z" fill="#efefeb" stroke="#cfcec8" stroke-width="0.8"/>
</svg>
<!-- paste -->
<svg style="left:259px;top:52px" width="23" height="25" viewBox="0 0 23 25">
 <defs><linearGradient id="clipg" x1="0" y1="0" x2="0.4" y2="1"><stop offset="0" stop-color="#f8e070"/><stop offset="0.45" stop-color="#f0a830"/><stop offset="1" stop-color="#e07810"/></linearGradient></defs>
 <rect x="1" y="4.5" width="13" height="18.5" rx="1" fill="url(#clipg)" stroke="#a86a20" stroke-width="0.7"/>
 <path d="M4 6 Q4 1.3 7.5 1.3 Q11 1.3 11 6 Z" fill="#d4d4e4" stroke="#8a8aa8" stroke-width="0.7"/>
 <path d="M9 9.5 L17 9.5 L21.5 14 L21.5 23.5 L9 23.5 Z" fill="#f6f6fc" stroke="#9a9ab0" stroke-width="0.8"/>
</svg>
<!-- print -->
<svg style="left:288px;top:53px" width="24" height="23" viewBox="0 0 24 23">
 <path d="M5 2 L12.5 0.5 L15.5 8 L8 9.5 Z" fill="#f2f2ee" stroke="#c4c3be" stroke-width="0.9"/>
 <path d="M1 11 L9 7.5 L21.5 11.5 L21.5 16 L12.5 22 L1 17.5 Z" fill="#e6e5e0" stroke="#b8b7b2" stroke-width="1"/>
 <path d="M1.5 12 L12.5 16 L21 12" fill="none" stroke="#cfcec8" stroke-width="0.8"/>
 <path d="M12 17.5 L22.5 13 L23.5 16 L13.5 21.5 Z" fill="#f6f6f2" stroke="#c6c5c0" stroke-width="0.7"/>
</svg>
<!-- zoom in -->
<svg style="left:323px;top:53px" width="24" height="24" viewBox="0 0 24 24">
 <path d="M12.5 12.5 L21.5 21.5" stroke="#8a6a2a" stroke-width="3.8" stroke-linecap="round"/>
 <path d="M12.5 12.5 L21.5 21.5" stroke="#f0c060" stroke-width="2.2" stroke-linecap="round"/>
 <circle cx="8.2" cy="8.2" r="7.2" fill="url(#lens)" stroke="#6a8aa0" stroke-width="1.1"/>
 <path d="M1.5 19.5 L8 19.5 M4.75 16.2 L4.75 22.8" stroke="#2a9a2a" stroke-width="3.2"/>
 <path d="M1.5 19.5 L8 19.5 M4.75 16.2 L4.75 22.8" stroke="#7ae87a" stroke-width="1.4"/>
</svg>
<!-- zoom out -->
<svg style="left:352px;top:53px" width="24" height="24" viewBox="0 0 24 24">
 <path d="M12.5 12.5 L21.5 21.5" stroke="#8a6a2a" stroke-width="3.8" stroke-linecap="round"/>
 <path d="M12.5 12.5 L21.5 21.5" stroke="#f0c060" stroke-width="2.2" stroke-linecap="round"/>
 <circle cx="8.2" cy="8.2" r="7.2" fill="url(#lens)" stroke="#6a8aa0" stroke-width="1.1"/>
 <path d="M1 19.5 L8 19.5" stroke="#2a9a2a" stroke-width="3.2"/>
 <path d="M1.5 19.5 L7.5 19.5" stroke="#7ae87a" stroke-width="1.2"/>
</svg>
<!-- view 1 (pressed) -->
<div class="a" style="left:379px;top:52px;width:28px;height:1px;background:#55544f"></div>
<div class="a" style="left:379px;top:52px;width:1px;height:27px;background:#55544f"></div>
<svg style="left:381px;top:55px" width="27" height="24" viewBox="0 0 27 24">
 <rect x="0.5" y="0.5" width="22" height="18" fill="#f6f8ff" stroke="#3a5ac8" stroke-width="1"/>
 <rect x="0.5" y="0.5" width="22" height="3" fill="url(#winhead)"/>
 <rect x="4" y="6" width="3" height="3" fill="#e0a040"/><rect x="4" y="10" width="3" height="1" fill="#888"/>
 <rect x="14" y="6" width="3" height="3" fill="#e0a040"/><rect x="14" y="10" width="3" height="1" fill="#888"/>
 <rect x="4" y="12.5" width="3" height="3" fill="#e0a040"/><rect x="4" y="16.5" width="3" height="1" fill="#888"/>
 <rect x="14" y="12.5" width="3" height="3" fill="#e0a040"/><rect x="14" y="16.5" width="3" height="1" fill="#888"/>
 <path d="M18 18.3 L26 18.3 L22 23 Z" fill="#000"/>
</svg>
<!-- view 2 -->
<svg style="left:411px;top:55px" width="27" height="24" viewBox="0 0 27 24">
 <rect x="0.5" y="0.5" width="21.5" height="18" fill="#f6f8ff" stroke="#3a5ac8" stroke-width="1"/>
 <rect x="0.5" y="0.5" width="21.5" height="3" fill="url(#winhead)"/>
 <rect x="4" y="6.5" width="3" height="3" fill="#e0a040"/><rect x="8" y="8" width="2" height="1" fill="#666"/><rect x="11.5" y="8" width="6" height="1" fill="#888"/>
 <rect x="4" y="12.5" width="3" height="3" fill="#c09050"/><rect x="8" y="14" width="2" height="1" fill="#666"/><rect x="11.5" y="14" width="6" height="1" fill="#888"/>
 <path d="M17 18.3 L25.5 18.3 L21.2 23 Z" fill="#000"/>
</svg>
<!-- throbber -->
<svg style="left:1251px;top:53px" width="23" height="23" viewBox="0 0 23 23">
 <defs>
  <linearGradient id="gearg" x1="1" y1="0" x2="0" y2="1"><stop offset="0" stop-color="#ffffff"/><stop offset="0.5" stop-color="#d8d4cc"/><stop offset="1" stop-color="#9a9690"/></linearGradient>
  <radialGradient id="sph" cx="0.65" cy="0.45" r="0.6"><stop offset="0" stop-color="#e8c888"/><stop offset="0.5" stop-color="#c8b088"/><stop offset="1" stop-color="#8a8478"/></radialGradient>
 </defs>
 <rect x="0" y="0" width="23" height="23" fill="#050505"/>
 <path d="M10.09 4.33 L10.97 1.81 L14.00 2.12 L14.37 4.76 L16.46 6.04 L18.98 5.16 L20.63 7.72 L18.79 9.66 L19.09 12.08 L21.35 13.51 L20.38 16.39 L17.72 16.16 L16.01 17.91 L16.31 20.57 L13.45 21.61 L11.97 19.39 L9.53 19.14 L7.64 21.03 L5.05 19.44 L5.86 16.90 L4.53 14.84 L1.88 14.53 L1.50 11.52 L4.00 10.57 L4.78 8.25 L3.36 5.98 L5.49 3.81 L7.79 5.17 Z" fill="url(#gearg)"/>
 <circle cx="11.8" cy="11.5" r="5.8" fill="url(#sph)"/>
 <ellipse cx="10" cy="9.5" rx="2.5" ry="2" fill="#f4f0e4" opacity="0.5"/>
</svg>

</body></html>
